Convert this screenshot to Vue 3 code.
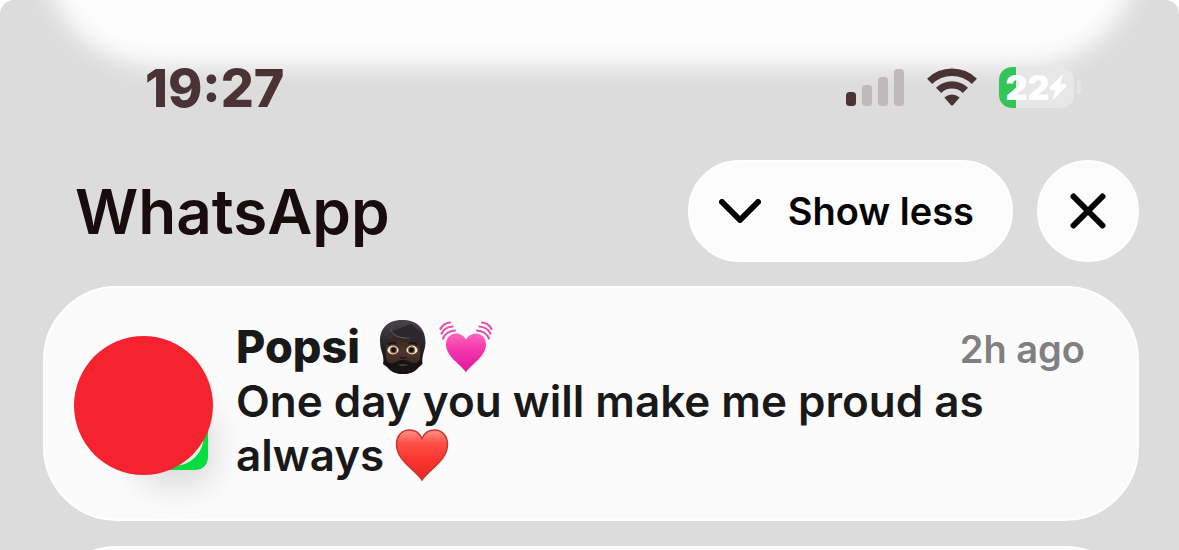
<script setup>
import { ref } from 'vue'

const level = ref(22)
const bars = [
  { y: 24, h: 14, on: true },
  { y: 17, h: 21, on: false },
  { y: 9, h: 29, on: false },
  { y: 1, h: 37, on: false }
]
</script>

<template>
  <main class="screen">
    <div class="glow"></div>

    <div class="status">
      <time class="clock">19:27</time>
      <div class="indicators">
        <svg class="signal" viewBox="0 0 58 38" role="img" aria-label="Signal">
          <rect v-for="(b, i) in bars" :key="i" :x="i * 16" :y="b.y" width="10" :height="b.h" rx="3.5"
            :fill="b.on ? '#4a3336' : '#bfb9ba'" />
        </svg>
        <svg class="wifi" viewBox="0 0 50 38" role="img" aria-label="Wi-Fi">
          <g fill="none" stroke="#4a3336" stroke-width="7.4">
            <path d="M2.6 13.4A32 32 0 0 1 47.4 13.4" />
            <path d="M11.6 22.4A19 19 0 0 1 38.4 22.4" />
          </g>
          <path d="M17.3 29.4Q25 23.4 32.7 29.4L26.2 36.9Q25 38 23.8 36.9Z" fill="#4a3336" />
        </svg>
        <div class="battery">
          <div class="cell">
            <div class="charge" :style="{ width: level + '%' }"></div>
            <span class="level">{{ level }}</span>
            <svg class="bolt" viewBox="0 0 18 26" aria-hidden="true">
              <path d="M14 0.5L0.8 13.6Q0.3 15.5 1.6 15.7H7L4 25.5L17.1 12.4Q17.6 10.5 16.2 10.3H10.8Z" fill="#fff" stroke="#fff" stroke-width="0.8" />
            </svg>
          </div>
          <div class="nub"></div>
        </div>
      </div>
    </div>

    <header class="heading">
      <h1>WhatsApp</h1>
      <div class="actions">
        <button class="pill" type="button">
          <svg class="chevron" viewBox="0 0 42 24" aria-hidden="true">
            <path d="M3 3L21 21L39 3" />
          </svg>
          <span>Show less</span>
        </button>
        <button class="close" type="button" aria-label="Close">
          <svg viewBox="0 0 36 36" aria-hidden="true">
            <path d="M3.5 3.5L32.5 32.5M32.5 3.5L3.5 32.5" />
          </svg>
        </button>
      </div>
    </header>

    <article class="card">
      <div class="avatar">
        <svg class="app" viewBox="0 0 64 64" aria-hidden="true">
          <rect width="64" height="64" rx="12" fill="#08dc43" />
          <circle cx="31" cy="31" r="26.5" fill="#35e264" stroke="#dcf7df" stroke-width="4" />
        </svg>
        <div class="face"></div>
      </div>
      <div class="content">
        <div class="top">
          <h2>
            <span>Popsi</span>
            <svg class="man" viewBox="0 0 48 56" role="img" aria-label="Bearded man">
              <defs>
                <linearGradient id="hair" x1="0" y1="0" x2="0" y2="1">
                  <stop offset="0" stop-color="#4b454b" />
                  <stop offset="0.5" stop-color="#252126" />
                  <stop offset="1" stop-color="#0d0b0d" />
                </linearGradient>
                <linearGradient id="skin" x1="0" y1="0" x2="0" y2="1">
                  <stop offset="0" stop-color="#35231e" />
                  <stop offset="0.5" stop-color="#4d352e" />
                  <stop offset="1" stop-color="#33221d" />
                </linearGradient>
              </defs>
              <path d="M1 22C1 8 10 1 23 1C38 1 46.5 9 46.5 24C46 32 42.5 36 43.5 45L40 48C35 53 30 55 24 55S13 53 8 48L4 45C6 36 1 33 1 22Z" fill="url(#hair)" />
              <path d="M7 26C11 24 12 21 14 17C21 22 34 20 38 24L41 28V39C40 47 34 51 24 51S8 47 7 39Z" fill="url(#skin)" />
              <path d="M7 40C9 45 13 45 17 43Q20 40.5 24 41Q28 40.5 31 43C35 45 39 45 41 40C42 49 35 55 24 55S6 49 7 40Z" fill="#171214" />
              <path d="M12 13C16 21 27 20 35 21Q40 22 42 29L44 15L32 5Z" fill="#2c272c" />
              <path d="M12 9C13 18 24 18.5 34 19C27 20.2 15 20 11.5 11Z" fill="#6a6068" />
              <ellipse cx="14" cy="31" rx="5.6" ry="4.4" fill="#f3e6ca" />
              <ellipse cx="33" cy="31" rx="5.6" ry="4.4" fill="#f3e6ca" />
              <circle cx="14.5" cy="31" r="3.6" fill="#8b5b38" />
              <circle cx="32.5" cy="31" r="3.6" fill="#8b5b38" />
              <circle cx="14.5" cy="31" r="2.4" fill="#15100f" />
              <circle cx="32.5" cy="31" r="2.4" fill="#15100f" />
              <path d="M9 25.5Q13 22.5 17 24.5M30 24.5Q34 22.5 38 25.5" stroke="#171012" stroke-width="1.6" fill="none" />
              <path d="M21 38Q24 40 27 38" stroke="#21130f" stroke-width="1.5" fill="none" />
              <path d="M18.5 46Q24 44 29.5 46Q24 48.5 18.5 46Z" fill="#51342f" />
            </svg>
            <svg class="beat" viewBox="0 0 54 52" role="img" aria-label="Beating heart">
              <defs>
                <linearGradient id="pink" x1="0" y1="0" x2="0" y2="1">
                  <stop offset="0" stop-color="#ff67bd" />
                  <stop offset="0.35" stop-color="#f63baf" />
                  <stop offset="1" stop-color="#e0159b" />
                </linearGradient>
              </defs>
              <path d="M27 51.5C23 44 7 36 7 23.5C7 16.5 11.5 12.5 17 12.5C21.5 12.5 25 15 27 18.5C29 15 32.5 12.5 37 12.5C42.5 12.5 47 16.5 47 23.5C47 36 31 44 27 51.5Z" fill="url(#pink)" />
              <g fill="none" stroke="#e850ae" stroke-width="2.2" stroke-linecap="round">
                <path d="M4 17.5Q7.5 10 16 9.5" />
                <path d="M2.5 12.5Q6 6 13.5 5.5" />
                <path d="M1.5 8Q4.5 2 11 1.5" />
                <path d="M50 17.5Q46.5 10 38 9.5" />
                <path d="M51.5 12.5Q48 6 40.5 5.5" />
                <path d="M52.5 8Q49.5 2 43 1.5" />
              </g>
            </svg>
          </h2>
          <time class="ago">2h ago</time>
        </div>
        <p>
          One day you will make me proud as always
          <svg class="heart" viewBox="0 0 54 52" role="img" aria-label="Red heart">
            <defs>
              <linearGradient id="red" x1="0" y1="0" x2="0" y2="1">
                <stop offset="0" stop-color="#ff9588" />
                <stop offset="0.25" stop-color="#fb5249" />
                <stop offset="0.6" stop-color="#fa342d" />
                <stop offset="1" stop-color="#e02a23" />
              </linearGradient>
            </defs>
            <path d="M27 51C21 41 1.5 32 1.5 15.5C1.5 6 7.5 1 14.5 1C20.5 1 25 4.5 27 9.5C29 4.5 33.5 1 39.5 1C46.5 1 52.5 6 52.5 15.5C52.5 32 33 41 27 51Z" fill="url(#red)" stroke="#cb352f" stroke-width="1.5" />
          </svg>
        </p>
      </div>
    </article>

    <div class="card next"></div>
  </main>
</template>

<style>
body {
  background: #fff;
}
</style>

<style scoped>
.screen {
  position: relative;
  box-sizing: border-box;
  height: 100vh;
  padding: 66px 40px 0 43px;
  overflow: hidden;
  border-radius: 14px 14px 0 0;
  background: #dcdcdc;
  color: #19191a;
  font-family: Inter, "Liberation Sans", sans-serif;
}

.glow {
  position: absolute;
  top: -160px;
  left: 44px;
  right: 40px;
  height: 226px;
  border-radius: 113px;
  background: #fdfdfd;
  filter: blur(12px);
}

.status {
  position: relative;
  display: flex;
  align-items: center;
  justify-content: space-between;
  height: 42px;
  padding: 0 58px 0 102px;
}

.clock {
  padding-top: 4px;
  color: #4a3336;
  font-size: 52px;
  font-weight: 800;
  line-height: 42px;
}

.indicators {
  display: flex;
  align-items: center;
}

.signal {
  width: 58px;
  height: 38px;
  margin-right: 23px;
}

.wifi {
  width: 50px;
  height: 38px;
  margin-right: 22px;
}

.battery {
  display: flex;
  align-items: center;
  gap: 3px;
}

.cell {
  position: relative;
  display: flex;
  align-items: center;
  justify-content: center;
  width: 75px;
  height: 41px;
  overflow: hidden;
  border-radius: 13px;
  background: #e7e7e7;
}

.charge {
  position: absolute;
  top: 0;
  left: 0;
  bottom: 0;
  background: #34c556;
}

.level {
  position: relative;
  color: #fff;
  font-size: 34px;
  font-weight: 900;
  line-height: 41px;
}

.bolt {
  position: relative;
  width: 18px;
  height: 26px;
}

.nub {
  width: 4px;
  height: 14px;
  border-radius: 0 4px 4px 0;
  background: #e5e5e5;
}

.heading {
  position: relative;
  display: flex;
  align-items: center;
  justify-content: space-between;
  margin: 52px 0 24px;
  padding-left: 32px;
}

h1 {
  margin: 0;
  padding-top: 2px;
  color: #180c0e;
  font-size: 62px;
  font-weight: 600;
  line-height: 100px;
}

.actions {
  display: flex;
  gap: 24px;
}

button {
  display: flex;
  align-items: center;
  height: 102px;
  border: 2px solid #fff;
  border-radius: 51px;
  background: #fcfcfc;
  color: #050505;
  font-family: inherit;
  font-size: 38px;
  font-weight: 600;
}

.pill {
  gap: 27px;
  padding: 0 37px 0 29px;
}

.close {
  justify-content: center;
  width: 102px;
  padding: 0;
}

button svg {
  fill: none;
  stroke: #050505;
  stroke-width: 6;
  stroke-linecap: round;
  stroke-linejoin: round;
}

.chevron {
  width: 42px;
  height: 24px;
}

.close svg {
  width: 36px;
  height: 36px;
}

.card {
  position: relative;
  display: flex;
  box-sizing: border-box;
  min-height: 235px;
  padding: 32px 52px 32px 29px;
  border: 2px solid #fff;
  border-radius: 74px;
  background: #fbfbfc;
}

.next {
  margin-top: 25px;
}

.avatar {
  position: relative;
  width: 139px;
  height: 139px;
  margin: 16px 23px 0 0;
  flex: none;
}

.face {
  position: absolute;
  inset: 0;
  border-radius: 50%;
  background: #f5232f;
}

.app {
  position: absolute;
  right: 5px;
  bottom: 5px;
  width: 64px;
  height: 64px;
  border-radius: 12px;
  box-shadow: 0 10px 34px 4px rgba(0, 0, 0, 0.14);
}

.content {
  flex: 1;
  min-width: 0;
}

.top {
  display: flex;
  align-items: center;
  justify-content: space-between;
}

h2 {
  display: flex;
  align-items: center;
  margin: 0;
  font-size: 45px;
  font-weight: 800;
  line-height: 54px;
}

.man {
  width: 48px;
  height: 56px;
  margin: -1px 12px -1px 19px;
}

.beat {
  width: 54px;
  height: 52px;
}

.ago {
  color: #808081;
  font-size: 38px;
  font-weight: 600;
  line-height: 58px;
  margin-bottom: -4px;
}

p {
  max-width: 780px;
  margin: 0;
  font-size: 44px;
  font-weight: 600;
  line-height: 54px;
}

.heart {
  width: 54px;
  height: 52px;
  margin: -10px 0;
  vertical-align: 0;
}
</style>
